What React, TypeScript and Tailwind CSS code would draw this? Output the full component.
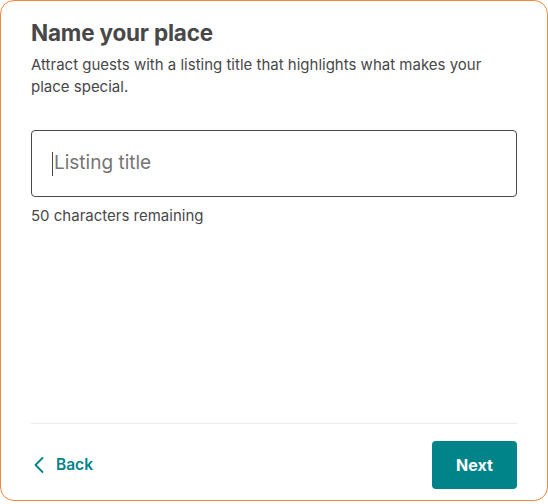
import React from "react";

export default function App() {
  return (
    <div className="w-[548px] h-[504px] bg-white" style={{ fontFamily: "Inter, 'Noto Sans', sans-serif" }}>
      <div className="w-[548px] h-[501px] border border-[#f5873a] rounded-[14px] flex flex-col px-[30px] pt-[17px] pb-[11px]">
        <h1 className="text-[22.5px] leading-[30px] font-bold text-[#484848] tracking-[-0.2px]">Name your place</h1>
        <p className="mt-[6px] text-[15px] leading-[22px] text-[#484848]">
          Attract guests with a listing title that highlights what makes your place special.
        </p>
        <div className="mt-[32px] h-[67px] border border-[#484848] rounded-[4px] flex items-center px-[20px]">
          <span className="w-px h-[24px] bg-[#484848]" />
          <span className="text-[19px] text-[#757575] ml-[1px]">Listing title</span>
        </div>
        <div className="mt-[8px] text-[15px] leading-[22px] text-[#484848]">50 characters remaining</div>
        <div className="flex-1" />
        <div className="h-px bg-[#ebebeb]" />
        <div className="mt-[17px] flex items-center justify-between">
          <button className="flex items-center gap-[12px] pl-[3px] text-[#008489] text-[15.5px] font-semibold">
            <svg width="10" height="16" viewBox="0 0 10 16" fill="none">
              <path d="M8.5 1 L1.5 8 L8.5 15" stroke="#008489" strokeWidth="1.8" strokeLinecap="round" strokeLinejoin="round" />
            </svg>
            Back
          </button>
          <button className="w-[85px] h-[48px] rounded-[4px] bg-[#008489] text-white text-[16px] font-bold">Next</button>
        </div>
      </div>
    </div>
  );
}
